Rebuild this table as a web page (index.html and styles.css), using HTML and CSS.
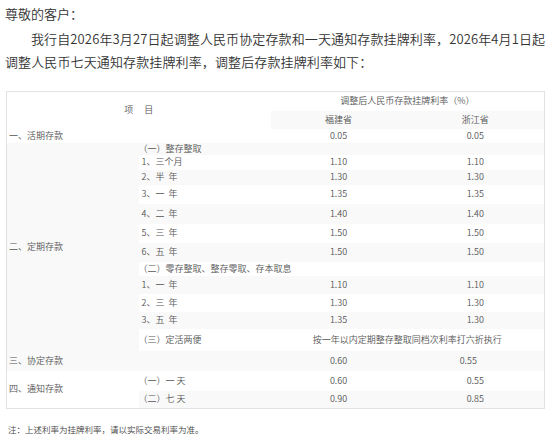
FILE: index.html
```html
<!DOCTYPE html>
<html lang="zh-CN">
<head>
<meta charset="utf-8">
<title>存款挂牌利率调整公告</title>
<link rel="stylesheet" href="styles.css">
</head>
<body>
<div class="page">
  <p class="greet">尊敬的客户：</p>
  <p class="body-text">我行自2026年3月27日起调整人民币协定存款和一天通知存款挂牌利率，2026年4月1日起调整人民币七天通知存款挂牌利率，调整后存款挂牌利率如下：</p>
  <table class="rates">
    <colgroup>
      <col class="c1"><col class="c2"><col class="c3"><col class="c4">
    </colgroup>
    <tr class="h1">
      <td colspan="2" rowspan="2" class="center">项　&nbsp;目</td>
      <td colspan="2" class="center">调整后人民币存款挂牌利率（%）</td>
    </tr>
    <tr class="h2 gray">
      <td class="center">福建省</td>
      <td class="center">浙江省</td>
    </tr>
    <tr class="r3">
      <td colspan="2" class="first">一、活期存款</td>
      <td class="center">0.05</td>
      <td class="center">0.05</td>
    </tr>
    <tr class="r4 gray">
      <td rowspan="12" class="first">二、定期存款</td>
      <td class="sub">（一）整存整取</td>
      <td></td><td></td>
    </tr>
    <tr class="r5"><td class="item">1、三个月</td><td class="center">1.10</td><td class="center">1.10</td></tr>
    <tr class="r6 gray"><td class="item">2、半&nbsp;&nbsp;年</td><td class="center">1.30</td><td class="center">1.30</td></tr>
    <tr class="r7"><td class="item">3、一&nbsp;&nbsp;年</td><td class="center">1.35</td><td class="center">1.35</td></tr>
    <tr class="r8 gray"><td class="item">4、二&nbsp;&nbsp;年</td><td class="center">1.40</td><td class="center">1.40</td></tr>
    <tr class="r9"><td class="item">5、三&nbsp;&nbsp;年</td><td class="center">1.50</td><td class="center">1.50</td></tr>
    <tr class="r10 gray"><td class="item">6、五&nbsp;&nbsp;年</td><td class="center">1.50</td><td class="center">1.50</td></tr>
    <tr class="r11"><td colspan="3" class="sub">（二）零存整取、整存零取、存本取息</td></tr>
    <tr class="r12 gray"><td class="item">1、一&nbsp;&nbsp;年</td><td class="center">1.10</td><td class="center">1.10</td></tr>
    <tr class="r13"><td class="item">2、三&nbsp;&nbsp;年</td><td class="center">1.30</td><td class="center">1.30</td></tr>
    <tr class="r14 gray"><td class="item">3、五&nbsp;&nbsp;年</td><td class="center">1.35</td><td class="center">1.30</td></tr>
    <tr class="r15">
      <td class="sub">（三）定活两便</td>
      <td colspan="2" class="center">按一年以内定期整存整取同档次利率打六折执行</td>
    </tr>
    <tr class="r16 gray">
      <td colspan="2" class="first">三、协定存款</td>
      <td class="center">0.60</td>
      <td class="center shift">0.55</td>
    </tr>
    <tr class="r17">
      <td rowspan="2" class="first">四、通知存款</td>
      <td class="sub">（一）一&nbsp;天</td>
      <td class="center">0.60</td>
      <td class="center">0.55</td>
    </tr>
    <tr class="r18 gray">
      <td class="sub">（二）七&nbsp;天</td>
      <td class="center">0.90</td>
      <td class="center">0.85</td>
    </tr>
  </table>
  <p class="note">注：上述利率为挂牌利率，请以实际交易利率为准。</p>
</div>
</body>
</html>
```

FILE: styles.css
```css
html, body {
  margin: 0;
  padding: 0;
  background: #ffffff;
}

.page {
  padding: 2px 0 0 5px;
  font-family: "Noto Sans CJK SC", "Microsoft YaHei", sans-serif;
  color: #333333;
}

.greet {
  margin: 0 0 2px;
  font-size: 13px;
  line-height: 23px;
  font-weight: 350;
}

.body-text {
  margin: 0;
  font-size: 13px;
  line-height: 23px;
  text-indent: 2em;
  letter-spacing: 0.12px;
  font-weight: 350;
}

.rates {
  margin: 18px 0 0 1px;
  width: 538px;
  border-collapse: collapse;
  border: 1px solid #e2e2e2;
  table-layout: fixed;
  font-size: 9px;
  line-height: 12px;
  color: #555555;
  font-weight: 350;
}

.c1 { width: 132px; }
.c2 { width: 132px; }
.c3 { width: 136px; }
.c4 { width: 138px; }

.rates td {
  padding: 0;
  vertical-align: middle;
  white-space: nowrap;
}

.rates .gray td {
  background: #f9f9f9;
}

.center { text-align: center; }
.first { padding-left: 2px !important; }
.sub { padding-left: 0 !important; }
.item { padding-left: 3px !important; }
.shift { padding-right: 14px !important; }

.h1 { height: 19px; }
.h2 { height: 18px; }
.r3 { height: 14px; }
.r4 { height: 12px; }
.r5 { height: 15px; }
.r6 { height: 15px; }
.r7 { height: 19px; }
.r8 { height: 20px; }
.r9 { height: 19px; }
.r10 { height: 19px; }
.r11 { height: 14px; }
.r12 { height: 18px; }
.r13 { height: 18px; }
.r14 { height: 17px; }
.r15 { height: 22px; }
.r16 { height: 20px; }
.r17 { height: 20px; }
.r18 { height: 18px; }

.note {
  margin: 12px 0 0 3px;
  font-size: 8.5px;
  line-height: 16px;
  color: #444444;
  font-weight: 350;
}
```
